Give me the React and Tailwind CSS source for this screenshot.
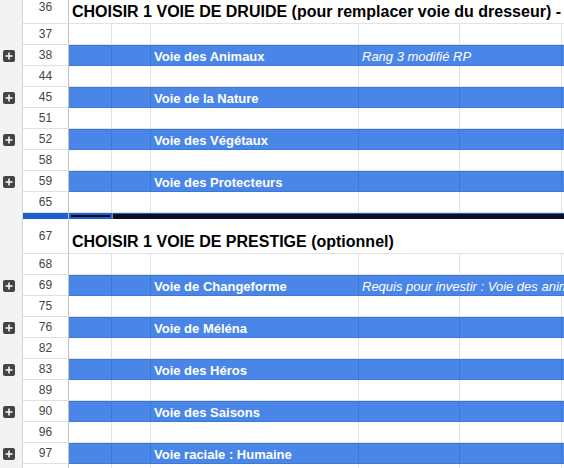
import React from "react";

const rows = [
  { n: "36", type: "title", h: "h-[33px] -mt-[9px]", text: "CHOISIR 1 VOIE DE DRUIDE (pour remplacer voie du dresseur) -" },
  { n: "37" },
  { n: "38", blue: true, c: "Voie des Animaux", d: "Rang 3 modifié RP" },
  { n: "44" },
  { n: "45", blue: true, c: "Voie de la Nature" },
  { n: "51" },
  { n: "52", blue: true, c: "Voie des Végétaux" },
  { n: "58" },
  { n: "59", blue: true, c: "Voie des Protecteurs" },
  { n: "65" },
  { n: "66", type: "thick" },
  { n: "67", type: "title", h: "h-[35px]", text: "CHOISIR 1 VOIE DE PRESTIGE (optionnel)" },
  { n: "68" },
  { n: "69", blue: true, c: "Voie de Changeforme", d: "Requis pour investir : Voie des animaux rang 3", long: true },
  { n: "75" },
  { n: "76", blue: true, c: "Voie de Méléna" },
  { n: "82" },
  { n: "83", blue: true, c: "Voie des Héros" },
  { n: "89" },
  { n: "90", blue: true, c: "Voie des Saisons" },
  { n: "96" },
  { n: "97", blue: true, c: "Voie raciale : Humaine" },
  { n: "", key: "98" },
];

function Plus() {
  return (
    <div className="ml-[3px] w-[12px] h-[12px] rounded-[2px] bg-[#444444] flex items-center justify-center">
      <svg width="12" height="12" viewBox="0 0 12 12">
        <path d="M6 2.5v7M2.5 6h7" stroke="#ffffff" strokeWidth="1.5" />
      </svg>
    </div>
  );
}

function Gutter({ plus }) {
  return (
    <div className="w-[23px] shrink-0 bg-[#f3f3f3] border-r border-r-[#d4d4d4] flex items-center">
      {plus ? <Plus /> : null}
    </div>
  );
}

function Header({ n, thick }) {
  if (thick) {
    return <div className="w-[46px] shrink-0 bg-[#1b5fd3] border-r border-r-[#c0c0c0]" />;
  }
  return (
    <div className="w-[46px] shrink-0 bg-white border-r border-r-[#c0c0c0] border-b border-b-[#e0e0e0] flex items-center justify-center text-[12px] text-[#444444]">
      {n}
    </div>
  );
}

function Cell({ w, br, blue, children, className = "" }) {
  const b = blue ? "border-b border-b-[#3c78d8]" : "border-b border-b-[#e2e2e2]";
  const r = br ? (blue ? "border-r border-r-[#3c78d8]" : "border-r border-r-[#e2e2e2]") : "";
  return (
    <div className={`${w} shrink-0 ${b} ${r} flex items-end whitespace-nowrap ${className}`}>
      {children}
    </div>
  );
}

function Row({ row }) {
  if (row.type === "thick") {
    return (
      <div className="flex h-[6px]">
        <Gutter />
        <Header thick />
        <div className="flex flex-1 bg-[#07101f]">
          <div className="w-[43px] shrink-0 border-2 border-[#1b5fd3] bg-[#040a16]" />
          <div className="w-[1px] shrink-0 bg-[#7a8496]" />
          <div className="flex-1 border-t border-t-[#1b5fd3]" />
        </div>
      </div>
    );
  }
  if (row.type === "title") {
    return (
      <div className={`flex ${row.h}`}>
        <Gutter />
        <Header n={row.n} />
        <div className="flex flex-1 bg-white">
          <Cell w="w-[43px]" className="pl-[3px] pb-[2px] text-[16px] font-bold text-black leading-[18px]">
            {row.text}
          </Cell>
          <Cell w="w-[39px]" />
          <Cell w="w-[208px]" />
          <Cell w="w-[101px]" />
          <Cell w="w-[102px]" />
          <Cell w="flex-1" />
        </div>
      </div>
    );
  }
  const blue = !!row.blue;
  return (
    <div className="flex h-[21px]">
      <Gutter plus={blue} />
      <Header n={row.n} />
      <div
        className={
          blue
            ? "flex flex-1 bg-[#4a86e8] shadow-[inset_0_1px_0_#3c78d8]"
            : "flex flex-1 bg-white"
        }
      >
        <Cell w="w-[43px]" br blue={blue} />
        <Cell w="w-[39px]" br blue={blue} />
        <Cell
          w="w-[208px]"
          br
          blue={blue}
          className="pl-[3px] pb-[1px] text-[13px] leading-[15px] font-bold text-white"
        >
          {row.c}
        </Cell>
        <Cell
          w="w-[101px]"
          br={!row.d}
          blue={blue}
          className="pl-[3px] pb-[1px] text-[13px] leading-[15px] italic text-white"
        >
          {row.d}
        </Cell>
        <Cell w="w-[102px]" br={!row.long} blue={blue} />
        <Cell w="flex-1" blue={blue} />
      </div>
    </div>
  );
}

export default function App() {
  return (
    <div className="w-[564px] h-[468px] overflow-hidden bg-white font-['Liberation_Sans',Arial,sans-serif]">
      {rows.map((r) => (
        <Row key={r.key || r.n} row={r} />
      ))}
    </div>
  );
}
